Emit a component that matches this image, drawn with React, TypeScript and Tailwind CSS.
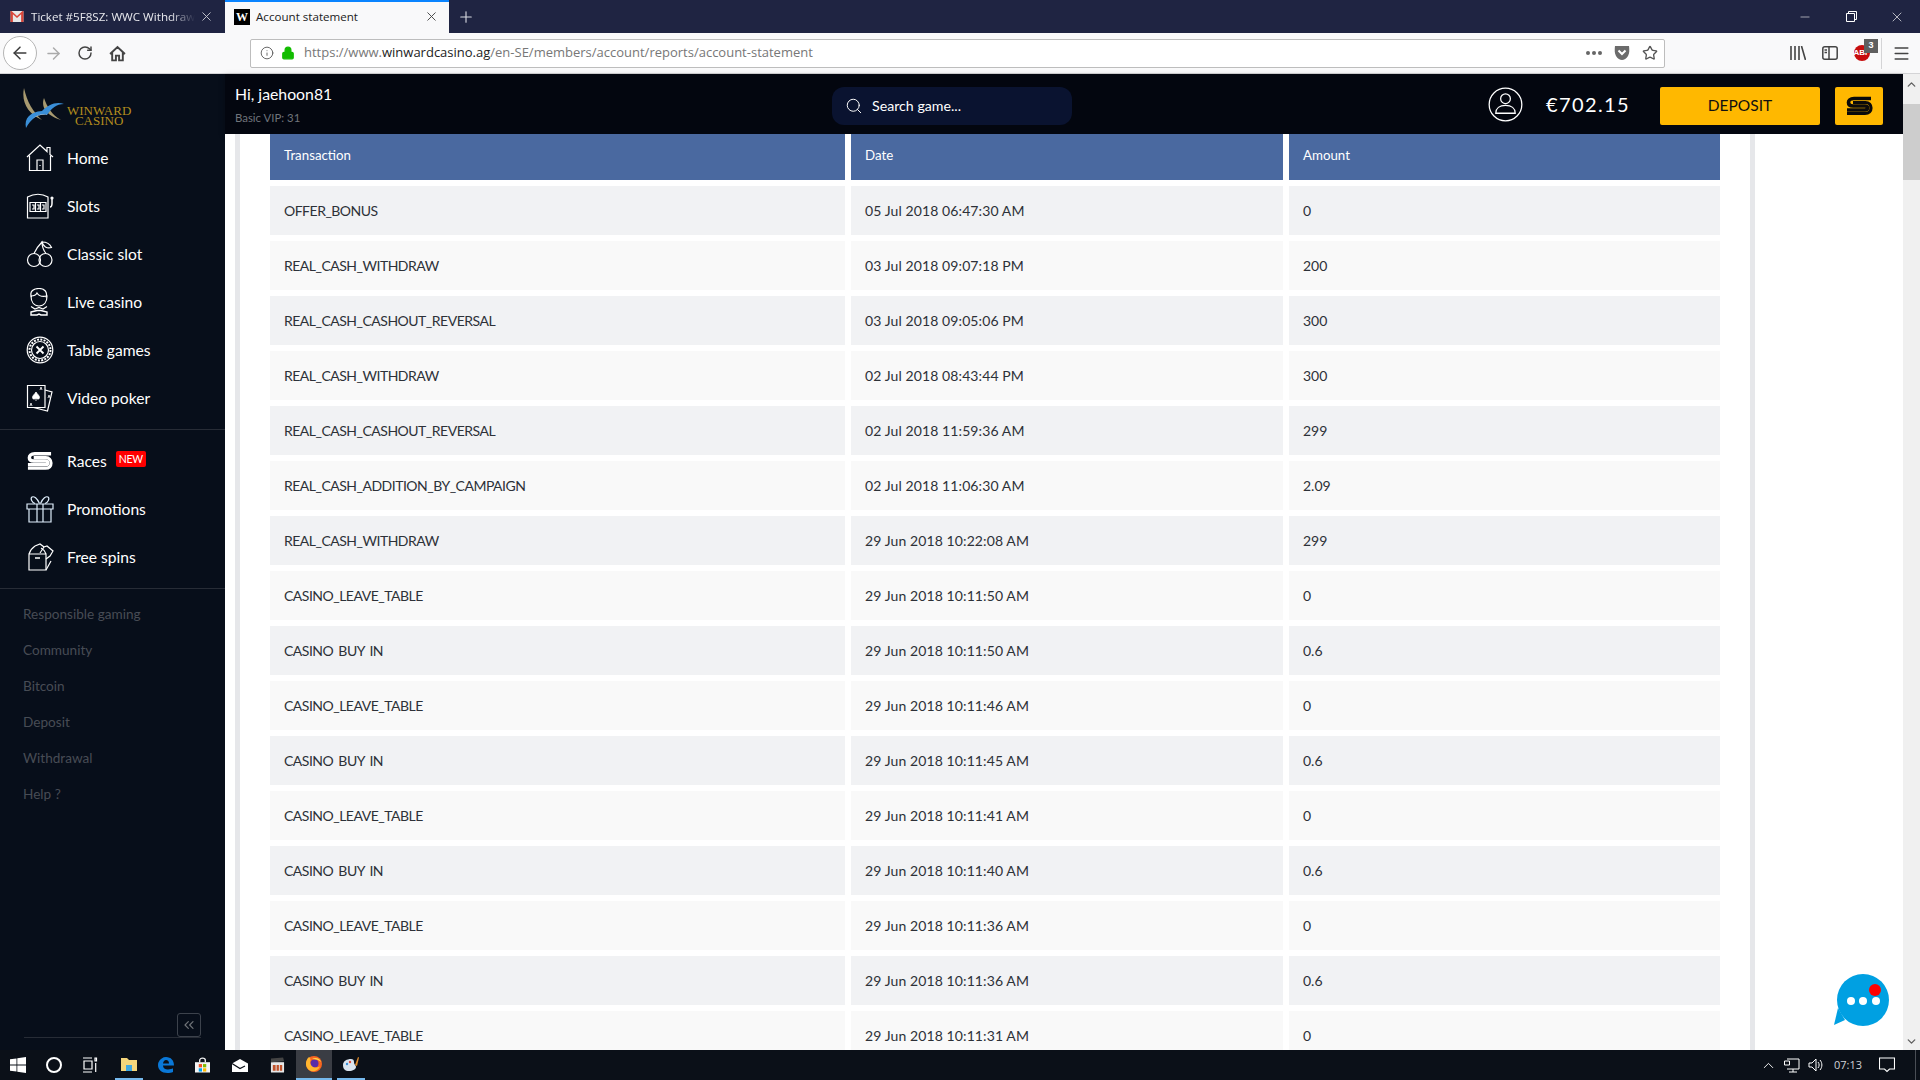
import { ArrowLeft, ArrowRight, ChevronDown, ChevronUp, ChevronsLeft, Info, Lock, Menu, Minus, Plus, RotateCw, Search, Star, X } from "lucide-react";

const rows = [
  ["OFFER_BONUS", "05 Jul 2018 06:47:30 AM", "0"],
  ["REAL_CASH_WITHDRAW", "03 Jul 2018 09:07:18 PM", "200"],
  ["REAL_CASH_CASHOUT_REVERSAL", "03 Jul 2018 09:05:06 PM", "300"],
  ["REAL_CASH_WITHDRAW", "02 Jul 2018 08:43:44 PM", "300"],
  ["REAL_CASH_CASHOUT_REVERSAL", "02 Jul 2018 11:59:36 AM", "299"],
  ["REAL_CASH_ADDITION_BY_CAMPAIGN", "02 Jul 2018 11:06:30 AM", "2.09"],
  ["REAL_CASH_WITHDRAW", "29 Jun 2018 10:22:08 AM", "299"],
  ["CASINO_LEAVE_TABLE", "29 Jun 2018 10:11:50 AM", "0"],
  ["CASINO BUY IN", "29 Jun 2018 10:11:50 AM", "0.6"],
  ["CASINO_LEAVE_TABLE", "29 Jun 2018 10:11:46 AM", "0"],
  ["CASINO BUY IN", "29 Jun 2018 10:11:45 AM", "0.6"],
  ["CASINO_LEAVE_TABLE", "29 Jun 2018 10:11:41 AM", "0"],
  ["CASINO BUY IN", "29 Jun 2018 10:11:40 AM", "0.6"],
  ["CASINO_LEAVE_TABLE", "29 Jun 2018 10:11:36 AM", "0"],
  ["CASINO BUY IN", "29 Jun 2018 10:11:36 AM", "0.6"],
  ["CASINO_LEAVE_TABLE", "29 Jun 2018 10:11:31 AM", "0"],
];

function RacesS({ color = "#fff", className = "" }: { color?: string; className?: string }) {
  return (
    <svg viewBox="0 0 28 20" className={className} fill="none">
      <path d="M26 2.500H9C5 2.500 3.500 4.500 3.500 6.500S5 10 8 10h12c1.500 0 2.500.6 2.500 1.800S21.500 14 20 14H2" stroke={color} strokeWidth="3.600" />
      <path d="M2 17.500h18c4 0 6-2.400 6-5.500 0-3-2-5.500-5.500-5.500H8" stroke={color} strokeWidth="3.200" />
    </svg>
  );
}

const icons: Record<string, React.ReactNode> = {
  Home: (
    <svg viewBox="0 0 28 28" className="w-[28px] h-[28px]" fill="none" stroke="#fff" strokeWidth="1.200">
      <path d="M1 13 14 1l7 6.500V3.500h3v7l3 2.500" />
      <path d="M3.500 11.500V26.500h21V11.500" />
      <path d="M11 26.500V16h6v10.500M14 21v1" />
    </svg>
  ),
  Slots: (
    <svg viewBox="0 0 28 28" className="w-[28px] h-[28px]" fill="none" stroke="#fff" strokeWidth="1.200">
      <path d="M1.500 5C8 1.500 16 1.500 22 5v21H1.500z" />
      <path d="M4 10.500h16v9H4z" />
      <path d="M9.500 10.500v9M14.500 10.500v9M6 13h2v4H6M11 13h2v4h-2M16 13h2v4h-2" />
      <path d="M24 15c2 0 2-2 2-4V7" strokeWidth="1.500" />
      <circle cx="26" cy="6" r="1" fill="#fff" />
    </svg>
  ),
  "Classic slot": (
    <svg viewBox="0 0 28 28" className="w-[28px] h-[28px]" fill="none" stroke="#fff" strokeWidth="1.200">
      <circle cx="8" cy="20" r="6.500" />
      <circle cx="19.500" cy="20" r="6.500" />
      <path d="M8 13.500C10 9 13 5 16 2c0 5 2 9 4 11.500" />
      <path d="M16 2c4 0 8 2 9.500 5.500C21 9 17 6.500 16 2z" />
    </svg>
  ),
  "Live casino": (
    <svg viewBox="0 0 28 28" className="w-[28px] h-[28px]" fill="none" stroke="#fff" strokeWidth="1.200">
      <path d="M5.500 9C3 3 8 .5 13 .5s9 3 7 9" />
      <path d="M5 8c0 6 3 10 8 10s8-4 8-10c-4 1-8 0-10-3-1 2-4 3-6 3z" />
      <path d="M5 18.500 9 21l4-1.500 4 1.500 4-2.500" />
      <path d="M5 24l6-1.500h4L21 24v3H15l-2-1-2 1H5z" strokeWidth="1.400" />
    </svg>
  ),
  "Table games": (
    <svg viewBox="0 0 28 28" className="w-[28px] h-[28px]" fill="none" stroke="#fff" strokeWidth="1.200">
      <circle cx="14" cy="14" r="12.800" />
      <circle cx="14" cy="14" r="10.500" strokeDasharray="2 1.300" strokeWidth="2" />
      <circle cx="14" cy="14" r="8.500" />
      <path d="m10.500 10.500 7 7M17.500 10.500l-7 7" strokeWidth="1.800" />
    </svg>
  ),
  "Video poker": (
    <svg viewBox="0 0 28 28" className="w-[28px] h-[28px]" fill="none" stroke="#fff" strokeWidth="1.200">
      <path d="M1.500 1.500h17.500v22H1.500z" />
      <path d="M19 6l7 2-4.500 19-14-3.500" />
      <path d="M10 8c1.500 2.500 3.500 3.500 3.500 5.500 0 2-2.500 2-3.500.5-1 1.500-3.500 1.500-3.500-.5C6.500 11.500 8.500 10.500 10 8zM10 14v3" fill="#fff" strokeWidth=".8" />
      <path d="M14 6l1-3 1 3M4 22l1-3 1 3M22 14l1-3 1 3" strokeWidth=".8" />
    </svg>
  ),
  Races: <RacesS className="w-[27px] h-[20px]" />,
  Promotions: (
    <svg viewBox="0 0 28 28" className="w-[28px] h-[28px]" fill="none" stroke="#dfeefc" strokeWidth="1.200">
      <path d="M1 9h26v5H1zM3 14v13h22V14M11 9v18M17 9v18" />
      <path d="M13.500 8.500C11 3 8 1 6 2c-2 1.500 0 5.500 3 6.500M14.500 8.500C17 3 20 1 22 2c2 1.500 0 5.500-3 6.500" />
    </svg>
  ),
  "Free spins": (
    <svg viewBox="0 0 28 28" className="w-[28px] h-[28px]" fill="none" stroke="#fff" strokeWidth="1.200">
      <path d="M3 11h17v16H3zM3 11c1-3 3-6 6-8M20 11c-1-3-3-5-5-6" />
      <path d="M9 15h5" strokeWidth="1.500" />
      <path d="m9 3 5-2 4 3-4 6M18 4l3-1 6 5-3 5-4 3M20 27l5-9" />
    </svg>
  ),
};

const mainLinks = ["Home", "Slots", "Classic slot", "Live casino", "Table games", "Video poker"];
const promoLinks = ["Races", "Promotions", "Free spins"];
const footerLinks = ["Responsible gaming", "Community", "Bitcoin", "Deposit", "Withdrawal", "Help ?"];

function NavLink({ name }: { name: string }) {
  return (
    <div className="h-[48px] flex items-center pl-[26px]">
      <span className="w-[41px] -mt-[2px] flex items-center shrink-0">{icons[name]}</span>
      <span className="text-[15.6px] text-white">{name}</span>
      {name === "Races" && (
        <span className="ml-[9px] -mt-[7px] bg-[#ff0000] text-white text-[10.5px] leading-[16px] px-[3px] rounded-[2px] tracking-[-0.3px]">NEW</span>
      )}
    </div>
  );
}

function Sidebar() {
  return (
    <aside className="w-[225px] shrink-0 bg-[#070e1a] flex flex-col">
      <div className="h-[60px] flex items-center pl-[22px]">
        <svg viewBox="0 0 44 42" className="w-[44px] h-[42px] mt-[9px]">
          <path d="M2 0C-1 14 6 26 20 32 11 24 5 14 2 0z" fill="#a89a70" />
          <path d="M22 10c-3 8 1 17 17 22C30 27 25 19 22 10z" fill="#a89a70" />
          <path d="M4 40c-2-10 4-16 16-17 6-6 14-10 22-7-8 0-12 4-17 11-7-2-15 2-21 13z" fill="#3a8fd8" />
          <path d="M10 31c5-4 11-6 16-4-6-1-11 0-16 4z" fill="#d7e6f2" />
        </svg>
        <div className="ml-[1px] mt-[23px] font-['Liberation_Serif',serif] text-[13px] leading-[10px] text-[#b38d1e] text-center">
          <div>WINWARD</div>
          <div>CASINO</div>
        </div>
      </div>
      <div className="pb-[6px] mt-[1px]">
        {mainLinks.map((n) => <NavLink key={n} name={n} />)}
      </div>
      <div className="border-t border-[#272c36] pt-[8px] pb-[6px]">
        {promoLinks.map((n) => <NavLink key={n} name={n} />)}
      </div>
      <div className="border-t border-[#272c36] pt-[7px] pl-[23px] flex flex-col">
        {footerLinks.map((n) => (
          <div key={n} className="h-[36px] flex items-center text-[13.6px] text-[#474c55]">{n}</div>
        ))}
      </div>
      <div className="mt-auto mb-[12px] mx-[24px] border-b border-[#272c36] flex justify-end">
        <div className="w-[24px] h-[24px] border border-[#3c424c] rounded-[3px] flex items-center justify-center">
          <ChevronsLeft className="w-[16px] h-[16px] text-[#6f7378]" strokeWidth={1.800} />
        </div>
      </div>
    </aside>
  );
}

function TopBar() {
  return (
    <header className="h-[60px] shrink-0 bg-[#03060f] flex items-center shadow-[0_2px_6px_rgba(0,0,0,0.25)] relative">
      <div className="w-[607px] pl-[10px] pb-[1px] shrink-0">
        <div className="text-[15.8px] leading-[22px] text-white">Hi, jaehoon81</div>
        <div className="text-[11.4px] leading-[14px] mt-[6px] text-[#70747b]">Basic VIP: 31</div>
      </div>
      <div className="w-[240px] h-[38px] mt-[4px] bg-[#0a1330] rounded-[12px] flex items-center pl-[13px] shrink-0">
        <Search className="w-[18px] h-[18px] text-white" strokeWidth={1.300} />
        <span className="ml-[9px] text-[14.2px] text-white">Search game...</span>
      </div>
      <svg viewBox="0 0 36 36" className="w-[35px] h-[35px] ml-[416px] shrink-0" fill="none" stroke="#fff" strokeWidth="1.300">
        <circle cx="18" cy="18" r="16.800" />
        <circle cx="18" cy="12" r="5" />
        <path d="M8 27c0-5 4-8 10-8s10 3 10 8zM8 27" />
      </svg>
      <span className="ml-[23px] text-[20px] tracking-[1.400px] text-white w-[114px] shrink-0">€702.15</span>
      <div className="w-[160px] h-[38px] mt-[4px] bg-[#ffb800] rounded-[2px] flex items-center justify-center text-[15.5px] text-[#111] shrink-0">DEPOSIT</div>
      <div className="w-[48px] h-[38px] mt-[4px] ml-[15px] bg-[#ffb800] rounded-[2px] flex items-center justify-center shrink-0">
        <RacesS color="#0a0a0a" className="w-[28px] h-[20px]" />
      </div>
    </header>
  );
}

function TxTable() {
  const head = "h-[46px] pb-[3px] bg-[#4a69a0] flex items-center pl-[14px] text-[13.3px] text-white";
  return (
    <div className="grid grid-cols-[575px_432px_431px] gap-x-[6px] gap-y-[6px]">
      <div className={head}>Transaction</div>
      <div className={head}>Date</div>
      <div className={head}>Amount</div>
      {rows.map((r, i) =>
        r.map((v, j) => (
          <div
            key={`${i}-${j}`}
            className={`h-[49px] flex items-center pl-[14px] text-[14px] text-[#2d3138] ${j === 0 ? "tracking-[-0.5px] [word-spacing:2px]" : ""} ${j === 1 ? "tracking-[0.1px]" : ""} ${i % 2 === 0 ? "bg-[#f1f2f4]" : "bg-[#f9f9f9]"}`}
          >
            {v}
          </div>
        ))
      )}
    </div>
  );
}

function BrowserChrome() {
  return (
    <>
      <div className="h-[33px] shrink-0 bg-[#1f2442] flex font-['Open_Sans',sans-serif] text-[11.6px]">
        <div className="w-[225px] flex items-center pl-[10px] text-[#e8e9ee]">
          <svg viewBox="0 0 14 12" className="w-[14px] h-[11px] shrink-0">
            <path d="M0 0h14v12H0z" fill="#e8e8e8" />
            <path d="M0 0v12h2.500V3.500L7 7.500l4.500-4V12H14V0h-1L7 5.500 1 0z" fill="#d9463a" />
          </svg>
          <span className="ml-[7px] w-[164px] whitespace-nowrap overflow-hidden [mask-image:linear-gradient(to_right,black_85%,transparent)]">Ticket #5F8SZ: WWC Withdrawal</span>
          <X className="w-[15px] h-[15px] ml-[4px] text-[#c5c7d0]" strokeWidth={1.500} />
        </div>
        <div className="w-[224px] bg-[#f9f9fa] border-t-2 border-[#0a84ff] flex items-center pl-[9px] pb-[2px] text-[#222]">
          <div className="w-[16px] h-[16px] bg-black text-white text-[12px] font-bold font-['Liberation_Serif',serif] flex items-center justify-center">W</div>
          <span className="ml-[6px] flex-1">Account statement</span>
          <X className="w-[15px] h-[15px] mr-[10px] text-[#444]" strokeWidth={1.500} />
        </div>
        <div className="w-[34px] flex items-center justify-center">
          <Plus className="w-[18px] h-[18px] text-[#d8d9e0]" strokeWidth={1.500} />
        </div>
        <div className="flex-1" />
        <div className="w-[46px] flex items-center justify-center"><Minus className="w-[14px] h-[14px] text-white" strokeWidth={1} /></div>
        <div className="w-[46px] flex items-center justify-center">
          <svg viewBox="0 0 11 11" className="w-[11px] h-[11px]" fill="none" stroke="#fff" strokeWidth="1"><path d="M.5 2.500h8v8h-8zM2.500 2.500v-2h8v8h-2" /></svg>
        </div>
        <div className="w-[46px] flex items-center justify-center"><X className="w-[16px] h-[16px] text-white" strokeWidth={1} /></div>
      </div>
      <div className="h-[41px] shrink-0 bg-[#f9f9fa] border-b border-[#d4d4d6] flex items-center text-[#444]">
        <div className="ml-[3px] w-[34px] h-[34px] rounded-full border border-[#b5b5b5] bg-white flex items-center justify-center">
          <ArrowLeft className="w-[20px] h-[20px] text-[#3c3c3c]" strokeWidth={1.800} />
        </div>
        <div className="w-[32px] flex justify-center"><ArrowRight className="w-[19px] h-[19px] text-[#aaa]" strokeWidth={1.800} /></div>
        <div className="w-[32px] flex justify-center"><RotateCw className="w-[16px] h-[16px]" strokeWidth={2.200} /></div>
        <div className="w-[32px] flex justify-center">
          <svg viewBox="0 0 16 16" className="w-[17px] h-[17px]" fill="none" stroke="#444" strokeWidth="1.800"><path d="M1 8.500 8 2l7 6.500M3 7v7.500h3.500V10h3v4.500H13V7" /></svg>
        </div>
        <div className="ml-[117px] w-[1415px] h-[29px] bg-white border border-[#bdbdbd] rounded-[2px] flex items-center font-['Open_Sans',sans-serif] text-[13px]">
          <Info className="ml-[9px] w-[14px] h-[14px] text-[#555]" strokeWidth={1.500} />
          <Lock className="ml-[7px] w-[14px] h-[14px] text-[#12bc00] fill-[#12bc00]" strokeWidth={2} />
          <span className="ml-[9px] text-[#777]">https://www.<span className="text-[#222]">winwardcasino.ag</span>/en-SE/members/account/reports/account-statement</span>
          <div className="ml-auto flex items-center">
            <span className="flex gap-[2px]">
              <i className="w-[4px] h-[4px] rounded-full bg-[#666]" /><i className="w-[4px] h-[4px] rounded-full bg-[#666]" /><i className="w-[4px] h-[4px] rounded-full bg-[#666]" />
            </span>
            <svg viewBox="0 0 16 16" className="ml-[12px] w-[16px] h-[16px]"><path d="M1 1h14c.5 4 .5 7-1 10-1.500 2.500-4 4-6 4s-4.500-1.500-6-4C.5 8 .5 5 1 1z" fill="#6b6b6b" /><path d="m4.500 5.500 3.500 3.500 3.500-3.500" fill="none" stroke="#fff" strokeWidth="2" /></svg>
            <Star className="ml-[12px] mr-[6px] w-[16px] h-[16px] text-[#555]" strokeWidth={2} />
          </div>
        </div>
        <svg viewBox="0 0 16 14" className="ml-[125px] w-[16px] h-[14px]" fill="none" stroke="#444" strokeWidth="1.600"><path d="M1 0v14M5 0v14M9 0v14M11.500 0 15.500 14" /></svg>
        <svg viewBox="0 0 16 14" className="ml-[16px] w-[16px] h-[14px]" fill="none" stroke="#444" strokeWidth="1.500"><rect x=".8" y=".8" width="14.400" height="12.400" rx="2" /><path d="M7 1v12M2.500 4H5M2.500 6.500H5" /></svg>
        <div className="relative ml-[16px] w-[16px] h-[16px] rounded-full bg-[#c70d0d] text-white text-[8px] font-bold flex items-center justify-center font-['Liberation_Sans',sans-serif]">
          ABP
          <span className="absolute -top-[6px] left-[10px] w-[14px] h-[14px] bg-[#5f5f5f] text-white text-[9px] flex items-center justify-center">3</span>
        </div>
        <div className="ml-[11px] w-px h-[31px] bg-[#d4d4d6]" />
        <Menu className="ml-[10px] w-[19px] h-[19px] text-[#444]" strokeWidth={1.800} />
      </div>
    </>
  );
}

function Taskbar() {
  const slot = "h-full flex items-center justify-center shrink-0";
  const running = "border-b-2 border-[#76b9ed]";
  return (
    <footer className="h-[30px] shrink-0 bg-[#0b1018] flex items-center text-white font-['Open_Sans',sans-serif]">
      <div className={`${slot} w-[36px]`}>
        <svg viewBox="0 0 16 16" className="w-[16px] h-[16px]" fill="#fff"><path d="m0 2.300 6.500-.9v6.200H0zM7.300 1.300 16 0v7.600H7.300zM0 8.400h6.500v6.200L0 13.700zM7.300 8.400H16V16l-8.700-1.200z" /></svg>
      </div>
      <div className={`${slot} w-[36px]`}>
        <div className="w-[16px] h-[16px] rounded-full border-[2.500px] border-white" />
      </div>
      <div className={`${slot} w-[36px]`}>
        <svg viewBox="0 0 16 16" className="w-[16px] h-[16px]" fill="none" stroke="#fff" strokeWidth="1.200"><path d="M1 1h9M1 15h9M2 4h8v8H2zM13 1h1.500v3H13zM13.700 6v9" /></svg>
      </div>
      <div className={`${slot} ${running} w-[28px] ml-[7px]`}>
        <svg viewBox="0 0 16 14" className="w-[16px] h-[14px]"><path d="M0 1h6l2 2h8v11H0z" fill="#f5d67b" /><path d="M5 8h6v6H5z" fill="#3fa7e0" /></svg>
      </div>
      <div className={`${slot} w-[36px] ml-[5px]`}>
        <svg viewBox="0 0 16 16" className="w-[16px] h-[16px]"><path d="M8 0c5 0 8 3.500 8 8.500H5c0 2.500 2 4 5 4 2 0 4-.6 5-1.200V15c-1.500.7-3.500 1-5.500 1C3.500 16 0 12.500 0 8c0-1 .2-2 .5-2.800C2 2 5 0 8 0zm-3 6.500h6C11 4.500 10 3 8 3 6.500 3 5.300 4.500 5 6.500z" fill="#0a78d7" /></svg>
      </div>
      <div className={`${slot} w-[36px]`}>
        <svg viewBox="0 0 16 16" className="w-[15px] h-[16px]"><path d="M0 5h16v11H0z" fill="#f3f3f3" /><path d="M5 5V3c0-3 6-3 6 0v2" fill="none" stroke="#f3f3f3" strokeWidth="1.400" /><path d="M4 7h3.500v3.500H4z" fill="#f25022" /><path d="M8.500 7H12v3.500H8.500z" fill="#7fba00" /><path d="M4 11.500h3.500V15H4z" fill="#00a4ef" /><path d="M8.500 11.500H12V15H8.500z" fill="#ffb900" /></svg>
      </div>
      <div className={`${slot} w-[36px] ml-[2px]`}>
        <svg viewBox="0 0 16 13" className="w-[16px] h-[13px]"><path d="M0 4.500 8 0l8 4.500V13H0z" fill="#fff" /><path d="m0 4.500 8 5 5-2.500" fill="none" stroke="#0b1018" strokeWidth="1.200" /></svg>
      </div>
      <div className={`${slot} w-[36px] ml-[1px]`}>
        <svg viewBox="0 0 16 16" className="w-[15px] h-[16px]"><path d="M1 5h14v11H1z" fill="#e8e8e8" /><path d="M1 1l13-1 1 4-14 1z" fill="#444" /><path d="M3 8h3v6H3zM7 8h2.500v6H7zM10.500 8H13v6h-2.500z" fill="#c0522a" /></svg>
      </div>
      <div className={`${slot} ${running} w-[36px] ml-[1px] bg-[#3a3d44]`}>
        <svg viewBox="0 0 16 16" className="w-[16px] h-[16px]"><circle cx="8" cy="8" r="8" fill="#f9651f" /><circle cx="8.500" cy="7.500" r="4" fill="#5a2ca8" /><path d="M3 1c1.500 1 2 3 1 5 .5 5 5 7 10 4.500C12 15 6 17 2.500 13.500S-1 5 3 1z" fill="#ffb52f" /><path d="M6 3c3-2 8-1 9 3-2-2-5-3-9-3z" fill="#ffd84a" /></svg>
      </div>
      <div className={`${slot} ${running} w-[28px] ml-[5px]`}>
        <svg viewBox="0 0 16 16" className="w-[16px] h-[16px]"><path d="M0 9c0-4 4-6 8-6 2 0 3 1 3 3 0 3 2 3 2 5s-3 4-7 4c-4 0-6-2-6-6z" fill="#d9e4ef" /><circle cx="4" cy="8" r="1.200" fill="#3a8fd8" /><circle cx="7" cy="6" r="1.200" fill="#e04b3a" /><path d="M12 9 15 1l1 .5L14 10z" fill="#e08a2a" /></svg>
      </div>
      <div className="ml-auto h-full flex items-center">
        <ChevronUp className="w-[17px] h-[17px]" strokeWidth={1.300} />
        <svg viewBox="0 0 16 16" className="ml-[7px] w-[16px] h-[16px]" fill="none" stroke="#fff" strokeWidth="1"><path d="M3 2h12v10H3M9 12v3M5 15h8M.5 4h5v4h-5z" /></svg>
        <svg viewBox="0 0 16 16" className="ml-[8px] w-[16px] h-[16px]" fill="none" stroke="#fff" strokeWidth="1"><path d="M1 6h3l4-4v12l-4-4H1zM10 5c1.500 2 1.500 4 0 6M12 3c2.500 3 2.500 7 0 10" /></svg>
        <span className="ml-[10px] w-[27px] text-[11px] text-[#d0d2d5] whitespace-nowrap">07:13</span>
        <svg viewBox="0 0 16 16" className="ml-[18px] mr-[20px] w-[16px] h-[16px]" fill="none" stroke="#fff" strokeWidth="1.100"><path d="M.5 1h15v11h-5L8 14.500 5.500 12h-5z" /></svg>
        <div className="w-px h-full bg-[#4a4e55] mr-[4px]" />
      </div>
    </footer>
  );
}

export default function App() {
  return (
    <div className="w-[1920px] h-[1080px] overflow-hidden flex flex-col relative font-['Lato',sans-serif]">
      <BrowserChrome />
      <div className="flex-1 min-h-0 flex">
        <Sidebar />
        <div className="flex-1 min-w-0 flex flex-col">
          <TopBar />
          <div className="flex-1 min-h-0 bg-white flex overflow-hidden relative">
            <div className="ml-[10px] w-[5px] bg-[#e6e7ea] shrink-0" />
            <div className="pl-[30px] pr-[30px] w-[1510px] shrink-0">
              <TxTable />
            </div>
            <div className="w-[5px] bg-[#e6e7ea] shrink-0" />
          </div>
        </div>
        <div className="w-[17px] bg-[#f0f0f0] shrink-0 flex flex-col items-center relative">
          <ChevronUp className="w-[13px] h-[13px] mt-[4px] text-[#606060]" strokeWidth={2.500} />
          <div className="w-full h-[76px] mt-[13px] bg-[#cdcdcd]" />
          <ChevronDown className="w-[13px] h-[13px] mt-auto mb-[2px] text-[#606060]" strokeWidth={2.500} />
        </div>
      </div>
      <Taskbar />
      <svg viewBox="0 0 60 60" className="absolute left-[1831px] top-[971px] w-[60px] h-[60px]">
        <circle cx="32" cy="29" r="26" fill="#00a0e2" />
        <path d="M7 37 14 49 3 54z" fill="#00a0e2" />
        <circle cx="20" cy="30" r="4" fill="#fff" />
        <circle cx="32" cy="30" r="4" fill="#fff" />
        <circle cx="45" cy="30" r="4" fill="#fff" />
        <circle cx="44" cy="19" r="6" fill="#ff0000" />
      </svg>
    </div>
  );
}
